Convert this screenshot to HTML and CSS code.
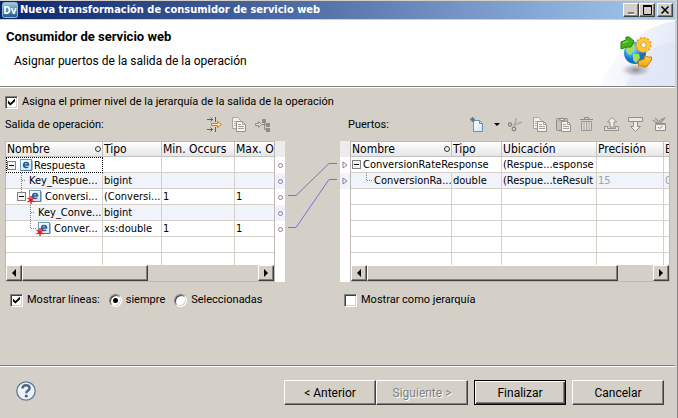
FILE: index.html
```
<!DOCTYPE html>
<html lang="es">
<head>
    <meta charset="UTF-8">
    <meta name="viewport" content="width=device-width, initial-scale=1.0">
    <title>Nueva transformación de consumidor de servicio web</title>
    <link rel="stylesheet" href="styles.css">
</head>
<body>
    <svg class="defs" aria-hidden="true">
        <defs>
            <linearGradient id="iconFill" x1="0" y1="0" x2="1" y2="1">
                <stop offset="0" stop-color="#ffffff"/>
                <stop offset="1" stop-color="#d2e4f4"/>
            </linearGradient>
            <symbol id="minus" viewBox="0 0 9 9">
                <rect x="0.5" y="0.5" width="8" height="8" fill="#f4f4f2" stroke="#808080"/>
                <path d="M2 4.5h5" stroke="#000"/>
            </symbol>
            <symbol id="element" viewBox="0 0 16 14">
                <rect x="2.5" y="1.5" width="11" height="11" fill="url(#iconFill)" stroke="#6f9fc8"/>
                <path d="M3 12.5h11v-10" fill="none" stroke="#4677a8"/>
                <path d="M5.500 7h5c0-1.600-1-2.500-2.400-2.500S5.600 5.500 5.600 7.100s1 2.500 2.600 2.500c.8 0 1.500-.2 2-.6" fill="none" stroke="#1d5a9c" stroke-width="1.500"/>
            </symbol>
            <symbol id="star" viewBox="0 0 8 8">
                <path d="M4 0v8M0.500 2l7 4M7.500 2l-7 4" stroke="#e8141c" stroke-width="1.400"/>
            </symbol>
            <symbol id="copy" viewBox="0 0 16 16">
                <path d="M1.500 0.500h5l3 3v8h-8z" fill="#f2f0ec" stroke="#a8a5a0"/>
                <path d="M3 4.500h3M3 6.500h3M3 8.500h3" stroke="#b5b2ad"/>
                <path d="M5.500 4.500h6l3 3v7h-9z" fill="#f6f5f2" stroke="#96938e"/>
                <path d="M11.500 4.500v3h3M7 7.500h3M7 9.500h6M7 11.500h6" fill="none" stroke="#a5a29d"/>
            </symbol>
        </defs>
    </svg>

    <div class="dialog">
        <header class="titlebar">
            <svg class="app-icon" viewBox="0 0 16 16">
                <defs>
                    <linearGradient id="dv" x1="0" y1="0" x2="0" y2="1">
                        <stop offset="0" stop-color="#a9d2e8"/>
                        <stop offset="0.500" stop-color="#4c86ad"/>
                        <stop offset="1" stop-color="#2a5c85"/>
                    </linearGradient>
                </defs>
                <rect x="0.500" y="0.500" width="15" height="15" rx="2" fill="url(#dv)" stroke="#8dbbd8"/>
                <text x="8" y="12" text-anchor="middle" class="app-text">Dv</text>
            </svg>
            <h1>Nueva transformación de consumidor de servicio web</h1>
            <div class="window-buttons">
                <button class="raised" aria-label="Minimizar"><svg viewBox="0 0 12 10"><path d="M3 8h6" stroke="#808080" stroke-width="2"/><path d="M4 9.500h6" stroke="#fff"/></svg></button>
                <button class="raised" aria-label="Maximizar"><svg viewBox="0 0 12 10"><path d="M2.500 1v8.500h8V1" fill="none" stroke="#000"/><path d="M2 1h9" stroke="#000" stroke-width="2"/></svg></button>
                <button class="raised close" aria-label="Cerrar"><svg viewBox="0 0 12 10"><path d="M2.500 1.500l7 7M9.500 1.500l-7 7" stroke="#000" stroke-width="1.600"/></svg></button>
            </div>
        </header>

        <section class="banner">
            <div class="banner-text">
                <h2>Consumidor de servicio web</h2>
                <p>Asignar puertos de la salida de la operación</p>
            </div>
            <svg class="banner-art" viewBox="0 0 75 66">
                <defs>
                    <linearGradient id="swoosh" x1="0" y1="0" x2="1" y2="0.200">
                        <stop offset="0" stop-color="#ffffff"/>
                        <stop offset="1" stop-color="#e6ebf8"/>
                    </linearGradient>
                    <radialGradient id="shadow">
                        <stop offset="0" stop-color="#8d8d92"/>
                        <stop offset="0.500" stop-color="#b9b9be" stop-opacity="0.700"/>
                        <stop offset="1" stop-color="#ffffff" stop-opacity="0"/>
                    </radialGradient>
                    <radialGradient id="globe" cx="0.350" cy="0.300">
                        <stop offset="0" stop-color="#bfeaff"/>
                        <stop offset="0.600" stop-color="#3aa6ea"/>
                        <stop offset="1" stop-color="#1470c4"/>
                    </radialGradient>
                    <linearGradient id="gold" x1="0" y1="0" x2="0" y2="1">
                        <stop offset="0" stop-color="#ffd84a"/>
                        <stop offset="1" stop-color="#f29a0c"/>
                    </linearGradient>
                </defs>
                <path d="M0 66C12 36 40 6 75 1v65z" fill="url(#swoosh)"/>
                <path d="M26 66C34 40 52 24 75 22v44z" fill="#dde3f6" opacity="0.600"/>
                <ellipse cx="36" cy="50" rx="18" ry="8" fill="url(#shadow)"/>
                <circle cx="35" cy="33" r="11" fill="url(#globe)"/>
                <path d="M27 26l5-2 3 2-1 4-3 1 1 3-3 1-3-4zM33 34l6 0 1 4-4 5-3-3zM40 24l4 3 1 5-4 0-2-4z" fill="#a2e05a"/>
                <path d="M21 29v-7l5-2v-3h3l5 4-3 6h-4z" fill="#44b31c" stroke="#25800c" stroke-linejoin="round"/>
                <path d="M23 23l5-2" stroke="#9ae86a"/>
                <circle cx="43.500" cy="25" r="5" fill="none" stroke="#ffc63c" stroke-width="4.500"/>
                <circle cx="43.500" cy="25" r="7.300" fill="none" stroke="#ee9f1c" stroke-width="1.600" stroke-dasharray="2.200 1.600"/>
                <circle cx="43.500" cy="25" r="2.600" fill="#fff" stroke="#d9860c" stroke-width="0.800"/>
                <path d="M38.500 41v5h5v1h3l5-7v-3h-3l-4-1v3z" fill="url(#gold)" stroke="#c97c06" stroke-linejoin="round"/>
            </svg>
        </section>

        <main class="content">
            <label class="check first-level"><input type="checkbox" checked>Asigna el primer nivel de la jerarquía de la salida de la operación</label>

            <div class="mapping">
                <section class="side">
                    <div class="side-head">
                        <h3>Salida de operación:</h3>
                        <div class="toolbar">
                            <button aria-label="Asignar">
                                <svg viewBox="0 0 16 16"><path d="M0 2.500h6M3.500 0.500l2 2-2 2M0 12.500h6M3.500 10.500l2 2-2 2" fill="none" stroke="#4d6478"/><path d="M8.500 0v5M8.500 10v5" stroke="#4d6478"/><path d="M4.500 6.500h6v-2l4 3-4 3v-2h-6z" fill="#ffe69a" stroke="#c08418"/></svg>
                            </button>
                            <button aria-label="Copiar"><svg viewBox="0 0 16 16"><use href="#copy"/></svg></button>
                            <button aria-label="Asignar jerarquía">
                                <svg viewBox="0 0 16 16"><path d="M0.500 6.500h3v-2l3 3-3 3v-2h-3z" fill="#e2dfda" stroke="#908d88"/><path d="M7 7.500h5M9.500 3.500v9h3" fill="none" stroke="#908d88"/><path d="M7 2h4v4h-4zM11 6h4v4h-4zM11 11h4v4h-4z" fill="#8f8c87"/></svg>
                            </button>
                        </div>
                    </div>
                    <div class="panel">
                        <div class="grid-box">
                            <div class="grid-view">
                                <table class="output">
                                    <colgroup><col class="c-name"><col class="c-type"><col class="c-min"><col class="c-max"></colgroup>
                                    <thead>
                                        <tr><th><div class="head">Nombre<i class="sort"></i></div></th><th>Tipo</th><th>Min. Occurs</th><th>Max. Occurs</th></tr>
                                    </thead>
                                    <tbody>
                                        <tr>
                                            <td class="focus"><div class="node"><svg class="tree w12" viewBox="0 0 12 15"><use href="#minus" x="1" y="3" width="9" height="9"/></svg><svg class="tree w16" viewBox="0 0 16 15"><use href="#element" y="0" width="16" height="14"/></svg><span>Respuesta</span></div></td>
                                            <td></td><td></td><td></td>
                                        </tr>
                                        <tr>
                                            <td><div class="node"><svg class="tree w23" viewBox="0 0 23 15"><path d="M15.500 0v15M16 7.500h4" class="dots"/></svg><span>Key_Respue...</span></div></td>
                                            <td>bigint</td><td></td><td></td>
                                        </tr>
                                        <tr>
                                            <td><div class="node"><svg class="tree w39" viewBox="0 0 39 15"><path d="M15.500 0v3" class="dots"/><use href="#minus" x="11" y="3" width="9" height="9"/><use href="#element" x="21" y="0" width="16" height="14"/><use href="#star" x="21" y="7" width="8" height="8"/></svg><span>Conversi...</span></div></td>
                                            <td>(Conversi...</td><td>1</td><td>1</td>
                                        </tr>
                                        <tr>
                                            <td><div class="node"><svg class="tree w32" viewBox="0 0 32 15"><path d="M24.500 0v15M25 7.500h4" class="dots"/></svg><span>Key_Conve...</span></div></td>
                                            <td>bigint</td><td></td><td></td>
                                        </tr>
                                        <tr>
                                            <td><div class="node"><svg class="tree w48" viewBox="0 0 48 15"><path d="M24.500 0v7M25 7.500h5" class="dots"/><use href="#element" x="30" y="0" width="16" height="14"/><use href="#star" x="30" y="7" width="8" height="8"/></svg><span>Conver...</span></div></td>
                                            <td>xs:double</td><td>1</td><td>1</td>
                                        </tr>
                                        <tr class="plain"><td></td><td></td><td></td><td></td></tr>
                                        <tr class="plain"><td></td><td></td><td></td><td></td></tr>
                                    </tbody>
                                </table>
                            </div>
                            <div class="scrollbar">
                                <button class="raised" aria-label="Izquierda"><svg viewBox="0 0 8 8"><path d="M6 0v8L2 4z"/></svg></button>
                                <div class="thumb thumb-left raised"></div>
                                <button class="raised end" aria-label="Derecha"><svg viewBox="0 0 8 8"><path d="M2 0v8l4-4z"/></svg></button>
                            </div>
                        </div>
                        <div class="ports">
                            <i class="port-head"></i>
                            <i class="port"><b class="ring"></b></i>
                            <i class="port alt"><b class="ring"></b></i>
                            <i class="port"><b class="ring"></b></i>
                            <i class="port alt"><b class="ring"></b></i>
                            <i class="port"><b class="ring"></b></i>
                        </div>
                    </div>
                </section>

                <svg class="links" viewBox="0 0 55 141">
                    <path d="M3 54.500h8L44 22.500h8M3 86.500h8L44 38.500h8" fill="none" stroke="#7272e0"/>
                </svg>

                <section class="side">
                    <div class="side-head">
                        <h3 class="ports-title">Puertos:</h3>
                        <div class="toolbar">
                            <button aria-label="Nuevo">
                                <svg viewBox="0 0 16 16"><path d="M3.500 3.500h6l3 3v8h-9z" fill="url(#iconFill)" stroke="#6e8fb4"/><path d="M9.500 3.500v3h3" fill="none" stroke="#6e8fb4"/><path d="M2.500 0v5M0 2.500h5M0.500 0.500l4 4M4.500 0.500l-4 4" stroke="#3c78ac" stroke-width="0.900"/></svg>
                            </button>
                            <button class="drop" aria-label="Más opciones"><svg viewBox="0 0 6 4"><path d="M0 0h6L3 3z"/></svg></button>
                            <button aria-label="Cortar">
                                <svg viewBox="0 0 16 16"><path d="M8.500 1L6.500 9M14 5L5 8.500" fill="none" stroke="#b0ada8" stroke-width="1.800"/><circle cx="2" cy="7.500" r="1.600" fill="none" stroke="#85827d" stroke-width="1.200"/><circle cx="6" cy="12" r="1.800" fill="none" stroke="#85827d" stroke-width="1.200"/></svg>
                            </button>
                            <button aria-label="Copiar"><svg viewBox="0 0 16 16"><use href="#copy"/></svg></button>
                            <button aria-label="Pegar">
                                <svg viewBox="0 0 16 16"><rect x="0.500" y="1.500" width="11" height="12" rx="1" fill="#c4c1bc" stroke="#8f8c87"/><path d="M3.500 3.500v-1.500h1.500l1-1.500 1 1.500h1.500v1.500z" fill="#e4e2de" stroke="#96938e"/><path d="M5.500 4.500h6l3 3v7h-9z" fill="#f6f5f2" stroke="#96938e"/><path d="M11.500 4.500v3h3M7 7.500h3M7 9.500h6M7 11.500h6" fill="none" stroke="#a5a29d"/></svg>
                            </button>
                            <button aria-label="Eliminar">
                                <svg viewBox="0 0 16 16"><path d="M0 2.500h13M4.500 2V0.500h4V2" fill="none" stroke="#8f8c87"/><path d="M1.500 4.500h10v9h-10z" fill="#dedbd6" stroke="#9b9893"/><path d="M4 5v8M6.500 5v8M9 5v8" stroke="#a8a5a0"/></svg>
                            </button>
                            <button aria-label="Subir">
                                <svg viewBox="0 0 16 16"><path d="M8 0.500l4.500 4.500h-2.500v5h-4v-5H3.500z" fill="#efede9" stroke="#93908b"/><path d="M0.500 9.500h3v2h8v-2h3v4h-14z" fill="#e4e1dc" stroke="#93908b"/></svg>
                            </button>
                            <button aria-label="Bajar">
                                <svg viewBox="0 0 16 16"><path d="M0.500 0.500h14v4h-14z" fill="#e9e6e1" stroke="#93908b"/><path d="M5.500 4.500h4v5h3L7.500 14.500 2.500 9.500h3z" fill="#efede9" stroke="#93908b"/></svg>
                            </button>
                            <button aria-label="Editar">
                                <svg viewBox="0 0 16 16"><path d="M0.500 3l5 3 3-3 5-2.500M3 1l3 3M7 7l6-6" fill="none" stroke="#9b9893" stroke-width="1.200"/><path d="M3.500 6.500h10v7h-10z" fill="#f2f0ec" stroke="#8f8c87"/><path d="M3 7.500h11" stroke="#a5a29d"/><path d="M6 10l1.500 1.500 3-2.500" fill="none" stroke="#8f8c87"/></svg>
                            </button>
                        </div>
                    </div>
                    <div class="panel">
                        <div class="ports ports-in">
                            <i class="port-head"></i>
                            <i class="port"><svg viewBox="0 0 6 8"><path d="M1 1v6l4-3z"/></svg></i>
                            <i class="port alt"><svg viewBox="0 0 6 8"><path d="M1 1v6l4-3z"/></svg></i>
                        </div>
                        <div class="grid-box">
                            <div class="grid-view">
                                <table class="input-ports">
                                    <colgroup><col class="c-pname"><col class="c-ptype"><col class="c-loc"><col class="c-prec"><col class="c-scale"></colgroup>
                                    <thead>
                                        <tr><th><div class="head">Nombre<i class="sort"></i></div></th><th>Tipo</th><th>Ubicación</th><th>Precisión</th><th>Escala</th></tr>
                                    </thead>
                                    <tbody>
                                        <tr>
                                            <td colspan="2"><div class="node"><svg class="tree w12" viewBox="0 0 12 15"><use href="#minus" x="1" y="3" width="9" height="9"/></svg><span>ConversionRateResponse</span></div></td>
                                            <td>(Respue...esponse</td><td></td><td></td>
                                        </tr>
                                        <tr>
                                            <td><div class="node"><svg class="tree w23" viewBox="0 0 23 15"><path d="M15.500 0v7M16 7.500h5" class="dots"/></svg><span>ConversionRa...</span></div></td>
                                            <td>double</td><td>(Respue...teResult</td><td class="dim">15</td><td class="dim">0</td>
                                        </tr>
                                        <tr class="plain"><td></td><td></td><td></td><td></td><td></td></tr>
                                        <tr class="plain"><td></td><td></td><td></td><td></td><td></td></tr>
                                        <tr class="plain"><td></td><td></td><td></td><td></td><td></td></tr>
                                        <tr class="plain"><td></td><td></td><td></td><td></td><td></td></tr>
                                        <tr class="plain"><td></td><td></td><td></td><td></td><td></td></tr>
                                    </tbody>
                                </table>
                            </div>
                            <div class="scrollbar">
                                <button class="raised" aria-label="Izquierda"><svg viewBox="0 0 8 8"><path d="M6 0v8L2 4z"/></svg></button>
                                <div class="thumb thumb-right raised"></div>
                                <button class="raised end" aria-label="Derecha"><svg viewBox="0 0 8 8"><path d="M2 0v8l4-4z"/></svg></button>
                            </div>
                        </div>
                    </div>
                </section>

                <div class="options">
                    <label class="check"><input type="checkbox" checked>Mostrar líneas:</label>
                    <label class="check"><input type="radio" name="lines" checked>siempre</label>
                    <label class="check"><input type="radio" name="lines">Seleccionadas</label>
                </div>
                <div class="options options-right">
                    <label class="check"><input type="checkbox">Mostrar como jerarquía</label>
                </div>
            </div>
        </main>

        <footer class="footer">
            <button class="help" aria-label="Ayuda">
                <svg viewBox="0 0 20 20"><circle cx="10" cy="10" r="9.200" fill="#eef1f5" stroke="#5f7896" stroke-width="1.300"/><path d="M6.500 7.500C6.500 5 8 4.200 10 4.200s3.600 1.100 3.600 3c0 2.500-3.300 2.300-3.300 5" fill="none" stroke="#4e6888" stroke-width="2.500"/><circle cx="10.300" cy="15" r="1.600" fill="#4e6888"/></svg>
            </button>
            <div class="actions">
                <div class="pair">
                    <button class="action raised">&lt; Anterior</button>
                    <button class="action raised" disabled>Siguiente &gt;</button>
                </div>
                <button class="action raised default">Finalizar</button>
                <button class="action raised">Cancelar</button>
            </div>
        </footer>
    </div>
</body>
</html>
```
FILE: styles.css
```
* {
    margin: 0;
    padding: 0;
    box-sizing: border-box;
}

body {
    background: #d4d0c8;
    color: #000;
    font: 11px/14px Roboto, Tahoma, sans-serif;
    overflow: hidden;
}

button, input {
    font: inherit;
    color: inherit;
}

button {
    display: flex;
    align-items: center;
    justify-content: center;
    border: none;
    background: none;
}

svg {
    display: block;
    flex: none;
}

.defs {
    position: absolute;
    width: 0;
    height: 0;
}

.dialog {
    display: flex;
    flex-direction: column;
    min-height: 100vh;
    padding: 1px 2px 0 0;
    border-right: 1px solid #808080;
}

.raised {
    background: #d4d0c8;
    border: 1px solid;
    border-color: #fff #404040 #404040 #fff;
    box-shadow: inset -1px -1px 0 #808080;
}

/* title bar */
.titlebar {
    display: flex;
    align-items: center;
    height: 18px;
    padding: 0 2px;
    gap: 2px;
    background: linear-gradient(to right, #0a246a, #a6caf0);
}

.app-icon {
    width: 16px;
    height: 16px;
}

.app-text {
    font: bold 10px "DejaVu Sans Condensed", sans-serif;
    fill: #fff;
}

.titlebar h1 {
    flex: 1;
    color: #fff;
    font-family: "DejaVu Sans Condensed", Tahoma, sans-serif;
    font-size: 11px;
    white-space: nowrap;
}

.window-buttons {
    display: flex;
}

.window-buttons button {
    width: 16px;
    height: 14px;
}

.window-buttons .close {
    margin-left: 2px;
}

.window-buttons svg {
    width: 12px;
    height: 10px;
}

/* banner */
.banner {
    display: flex;
    justify-content: space-between;
    margin-top: 1px;
    background: #fff;
    border-bottom: 1px solid #808080;
}

.banner-text {
    padding: 8px 0 0 6px;
}

.banner h2 {
    font-size: 13px;
    line-height: 18px;
}

.banner p {
    padding: 8px 0 0 8px;
    font-size: 12px;
    line-height: 14px;
}

.banner-art {
    width: 75px;
    height: 66px;
}

/* content */
.content {
    flex: 1;
    padding: 7px 5px 0;
    border-top: 1px solid #fff;
}

.check {
    display: flex;
    align-items: center;
    gap: 4px;
    white-space: nowrap;
}

.check input {
    flex: none;
    appearance: none;
    width: 13px;
    height: 13px;
    background: #fff;
    border: 1px solid;
    border-color: #808080 #fff #fff #808080;
    box-shadow: inset 1px 1px 0 #404040, inset -1px -1px 0 #d4d0c8;
}

.check input[type="checkbox"]:checked::before {
    content: "";
    display: block;
    width: 7px;
    height: 7px;
    margin: 2px;
    background: #000;
    clip-path: polygon(0 28%, 36% 64%, 100% 0, 100% 40%, 36% 100%, 0 70%);
}

.check input[type="radio"] {
    border-radius: 50%;
}

.check input[type="radio"]:checked::before {
    content: "";
    display: block;
    width: 5px;
    height: 5px;
    margin: 3px;
    background: #000;
    border-radius: 50%;
}

.mapping {
    display: grid;
    grid-template-columns: minmax(0, 280fr) 55px minmax(0, 330fr);
}

.side-head {
    display: flex;
    align-items: center;
    justify-content: space-between;
    height: 32px;
}

.side-head h3 {
    font-size: 11px;
    font-weight: normal;
}

.ports-title {
    padding-left: 8px;
}

.toolbar {
    display: flex;
    align-items: center;
    gap: 8px;
    padding-right: 14px;
}

.toolbar svg {
    width: 16px;
    height: 16px;
}

.ports-title + .toolbar {
    padding-right: 2px;
}

.toolbar .drop svg {
    width: 6px;
    height: 4px;
}

.panel {
    display: flex;
}

.grid-box {
    flex: 1;
    min-width: 0;
    border: 1px solid #bcbab8;
}

.grid-view {
    height: 123px;
    overflow: hidden;
    background: #fff;
}

table {
    table-layout: fixed;
    border-collapse: separate;
    border-spacing: 0;
    font-family: "DejaVu Sans Condensed", Tahoma, sans-serif;
    font-size: 11px;
}

.output { width: 337px; }
.input-ports { width: 362px; }
.c-name { width: 97px; }
.c-type { width: 59px; }
.c-min { width: 73px; }
.c-max { width: 108px; }
.c-pname { width: 101px; }
.c-ptype { width: 50px; }
.c-loc { width: 95px; }
.c-prec { width: 67px; }
.c-scale { width: 49px; }

th, td {
    height: 16px;
    padding-left: 1px;
    border-right: 1px solid #d4d0c8;
    border-bottom: 1px solid #d4d0c8;
    line-height: 15px;
    text-align: left;
    font-weight: normal;
    white-space: nowrap;
    overflow: hidden;
}

th {
    height: 15px;
    font-size: 12px;
    line-height: 14px;
    background: linear-gradient(#fff, #e6e6e6);
    border-color: #c2c2c2;
}

tbody tr:nth-child(even):not(.plain) td {
    background: #f0f3f9;
}

td:first-child {
    padding: 0;
}

td.focus {
    border-right: none;
    border-bottom: none;
    outline: 1px dotted #000;
    outline-offset: -1px;
}

td.dim {
    color: #9ba3b0;
}

.head {
    display: flex;
    align-items: center;
    justify-content: space-between;
    padding-right: 1px;
}

.sort {
    width: 6px;
    height: 6px;
    border: 1px solid #333;
    border-radius: 50%;
}

.node {
    display: flex;
    height: 15px;
}

.tree {
    height: 15px;
}

.w12 { width: 12px; }
.w16 { width: 16px; }
.w23 { width: 23px; }
.w32 { width: 32px; }
.w39 { width: 39px; }
.w48 { width: 48px; }

.dots {
    fill: none;
    stroke: #808080;
    stroke-dasharray: 1 1;
}

/* scrollbars */
.scrollbar {
    display: flex;
    height: 16px;
    background: #d4d0c8;
}

.scrollbar button {
    width: 16px;
    height: 16px;
}

.scrollbar .end {
    margin-left: auto;
}

.scrollbar svg {
    width: 8px;
    height: 8px;
}

.thumb-left {
    width: 47%;
}

.thumb-right {
    width: 79%;
}

/* connection points */
.ports {
    width: 10px;
    background: #fff;
}

.port-head, .port {
    display: flex;
    align-items: center;
    justify-content: center;
    height: 16px;
}

.port-head {
    background: #ececec;
}

.port.alt {
    background: #f0f3f9;
}

.ring {
    width: 5px;
    height: 5px;
    border: 1px solid #9674b0;
    border-radius: 50%;
}

.port svg {
    width: 6px;
    height: 8px;
    fill: none;
    stroke: #9674b0;
}

.links {
    align-self: end;
    width: 55px;
    height: 141px;
}

.options {
    display: flex;
    gap: 9px;
    padding: 11px 0 0 5px;
}

.options-right {
    grid-column: 3;
    padding-left: 4px;
}

/* footer */
.footer {
    display: flex;
    justify-content: space-between;
    height: 53px;
    padding: 14px 11px 0 16px;
    border-top: 1px solid #808080;
    box-shadow: inset 0 1px 0 #fff;
}

.help {
    width: 20px;
    height: 20px;
    margin-top: 1px;
}

.help svg {
    width: 20px;
    height: 20px;
}

.actions {
    display: flex;
    gap: 6px;
}

.pair {
    display: flex;
}

.action {
    width: 92px;
    height: 25px;
    font-size: 12px;
}

.action:disabled {
    color: #808080;
    text-shadow: 1px 1px 0 #fff;
}

.action.default {
    border-color: #000;
    box-shadow: inset 1px 1px 0 #fff, inset -1px -1px 0 #404040, inset -2px -2px 0 #808080;
}
```
